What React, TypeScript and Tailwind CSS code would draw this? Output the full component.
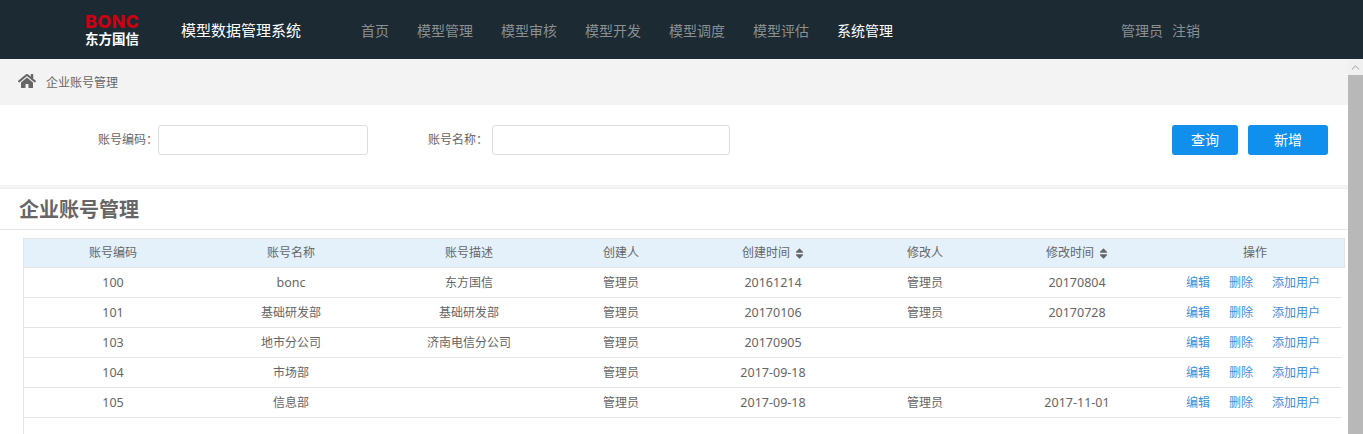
import { FaHome, FaSort } from "react-icons/fa";
import { ChevronUp } from "lucide-react";

const nav = ["首页", "模型管理", "模型审核", "模型开发", "模型调度", "模型评估", "系统管理"];

const rows = [
  ["100", "bonc", "东方国信", "管理员", "20161214", "管理员", "20170804"],
  ["101", "基础研发部", "基础研发部", "管理员", "20170106", "管理员", "20170728"],
  ["103", "地市分公司", "济南电信分公司", "管理员", "20170905", "", ""],
  ["104", "市场部", "", "管理员", "2017-09-18", "", ""],
  ["105", "信息部", "", "管理员", "2017-09-18", "管理员", "2017-11-01"],
];

const head = ["账号编码", "账号名称", "账号描述", "创建人", "创建时间", "修改人", "修改时间"];

const cols = "grid grid-cols-[178px_178px_178px_126px_178px_126px_178px_1fr]";

const App = () => {
  return (
    <div className="h-[434px] w-[1363px] overflow-hidden bg-white font-['Noto_Sans','Noto_Sans_CJK_SC',sans-serif] text-xs text-[#666]">
      {/* Header */}
      <header className="flex h-[59px] items-center bg-[#1c2a33] pl-[85px]">
        <div className="flex w-[96px] flex-col gap-[5px] pt-[1px] font-bold">
          <span className="font-['Inter',sans-serif] text-[18px] font-extrabold leading-[13px] tracking-[0.3px] text-[#cc0011]">BONC</span>
          <span className="text-[13.5px] leading-[13px] text-white">东方国信</span>
        </div>
        <div className="w-[180px] text-[15px] text-white">模型数据管理系统</div>
        <nav className="mt-[2px] flex gap-7 text-sm">
          {nav.map((n, i) => (
            <a key={n} className={i === 6 ? "text-white" : "text-[#8a8f92]"}>{n}</a>
          ))}
        </nav>
        <div className="ml-[228px] mt-[2px] flex gap-[9px] text-sm text-[#8a8f92]">
          <span>管理员</span>
          <span>注销</span>
        </div>
      </header>

      <div className="flex h-[375px]">
        <main className="flex flex-1 flex-col overflow-hidden">
          {/* Breadcrumb */}
          <div className="flex h-[46px] items-center bg-[#f3f3f3] pl-[18px]">
            <FaHome className="mb-[3px] text-[18px] text-[#666]" />
            <span className="ml-[10px] mt-[2px]">企业账号管理</span>
          </div>

          {/* Search */}
          <div className="flex h-[80px] items-start bg-white pl-[98px] pr-5 pt-5">
            <label className="w-[60px] leading-[30px]">账号编码：</label>
            <input className="h-[30px] w-[210px] rounded-[3px] border border-[#ddd] bg-white" />
            <label className="ml-[60px] w-[64px] leading-[30px]">账号名称：</label>
            <input className="h-[30px] w-[238px] rounded-[3px] border border-[#ddd] bg-white" />
            <button className="ml-auto h-[30px] w-[66px] rounded-[3px] bg-[#118fec] text-sm text-white">查询</button>
            <button className="ml-[10px] h-[30px] w-[80px] rounded-[3px] bg-[#118fec] text-sm text-white">新增</button>
          </div>

          <div className="h-1 border-b border-[#eeeeee] bg-[#f5f5f5]" />

          {/* Title */}
          <div className="h-[41px] border-b border-[#e8e8e8] pl-[19px] text-xl font-bold leading-[41px]">企业账号管理</div>

          {/* Table */}
          <div className="flex flex-1 flex-col pl-[23px] pr-[3px] pt-2">
            <div className={`${cols} h-[30px] items-center border border-[#e4e4e4] bg-[#e4f1fb] text-center`}>
              {head.map((h, i) => (
                <div key={h} className={`flex items-center justify-center gap-[3px] ${i === 4 || i === 6 ? "pl-[2px]" : ""}`}>
                  {h}
                  {(i === 4 || i === 6) && <FaSort className="text-[13px] text-[#666]" />}
                </div>
              ))}
              <div>操作</div>
            </div>
            <div className="mr-1 flex-1 border-l border-[#e4e4e4]">
              {rows.map((r) => (
                <div key={r[0]} className={`${cols} h-[30px] items-center border-b border-[#e4e4e4] text-center`}>
                  {r.map((c, i) => (
                    <div key={i} className={/^[\w-]+$/.test(c) ? "pt-[1px] text-[12.5px]" : ""}>{c}</div>
                  ))}
                  <div className="flex gap-[19px] pl-5 text-[#3d8fd9]">
                    <a>编辑</a>
                    <a>删除</a>
                    <a>添加用户</a>
                  </div>
                </div>
              ))}
            </div>
          </div>
        </main>

        {/* Scrollbar */}
        <div className="flex w-[15px] flex-col bg-[#b8b8b8]">
          <div className="flex h-4 items-center justify-center bg-[#f0f0f0]">
            <ChevronUp size={13} strokeWidth={1.5} className="text-[#888]" />
          </div>
        </div>
      </div>
    </div>
  );
};

export default App;
